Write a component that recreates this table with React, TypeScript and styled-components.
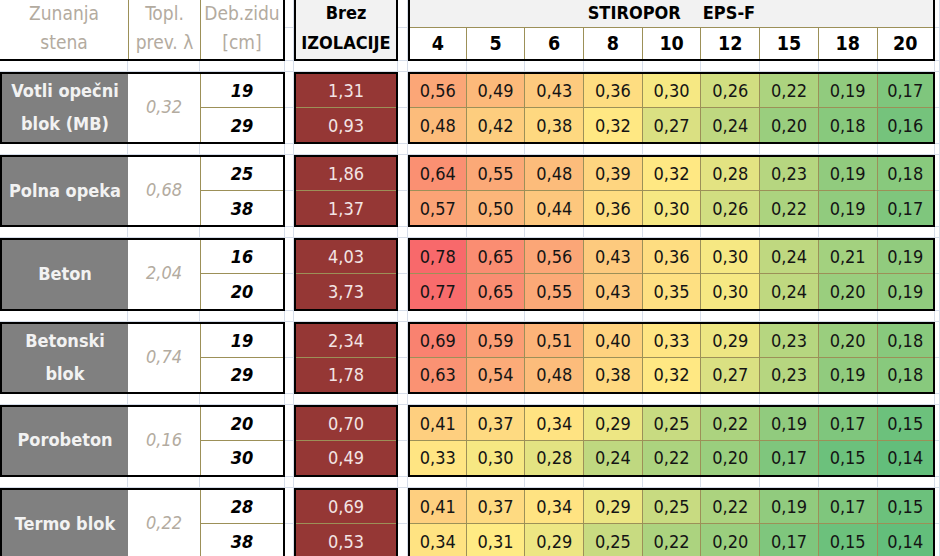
import styled, { createGlobalStyle } from "styled-components";

const GlobalStyle = createGlobalStyle`
  html, body {
    margin: 0;
    padding: 0;
    background: #ffffff;
    overflow: hidden;
  }
  body {
    font-family: "DejaVu Sans Condensed", "DejaVu Sans", sans-serif;
    font-stretch: condensed;
  }
`;

const OLIVE = "#9c9058";
const GRID = "#d6dde9";

const COLS = "128px 72px 85px 9px 104px 10px repeat(8, 58.7px) 57.4px 1fr";
const ROWS = "28px 33px 11px repeat(6, 36.1px 36.1px 11px)";

type Material = {
  name: string[];
  lambda: string;
  rows: { thickness: number; base: number; values: number[] }[];
};

const thicknesses = [4, 5, 6, 8, 10, 12, 15, 18, 20];

const materials: Material[] = [
  {
    name: ["Votli opečni", "blok (MB)"],
    lambda: "0,32",
    rows: [
      { thickness: 19, base: 1.31, values: [0.56, 0.49, 0.43, 0.36, 0.3, 0.26, 0.22, 0.19, 0.17] },
      { thickness: 29, base: 0.93, values: [0.48, 0.42, 0.38, 0.32, 0.27, 0.24, 0.2, 0.18, 0.16] },
    ],
  },
  {
    name: ["Polna opeka"],
    lambda: "0,68",
    rows: [
      { thickness: 25, base: 1.86, values: [0.64, 0.55, 0.48, 0.39, 0.32, 0.28, 0.23, 0.19, 0.18] },
      { thickness: 38, base: 1.37, values: [0.57, 0.5, 0.44, 0.36, 0.3, 0.26, 0.22, 0.19, 0.17] },
    ],
  },
  {
    name: ["Beton"],
    lambda: "2,04",
    rows: [
      { thickness: 16, base: 4.03, values: [0.78, 0.65, 0.56, 0.43, 0.36, 0.3, 0.24, 0.21, 0.19] },
      { thickness: 20, base: 3.73, values: [0.77, 0.65, 0.55, 0.43, 0.35, 0.3, 0.24, 0.2, 0.19] },
    ],
  },
  {
    name: ["Betonski", "blok"],
    lambda: "0,74",
    rows: [
      { thickness: 19, base: 2.34, values: [0.69, 0.59, 0.51, 0.4, 0.33, 0.29, 0.23, 0.2, 0.18] },
      { thickness: 29, base: 1.78, values: [0.63, 0.54, 0.48, 0.38, 0.32, 0.27, 0.23, 0.19, 0.18] },
    ],
  },
  {
    name: ["Porobeton"],
    lambda: "0,16",
    rows: [
      { thickness: 20, base: 0.7, values: [0.41, 0.37, 0.34, 0.29, 0.25, 0.22, 0.19, 0.17, 0.15] },
      { thickness: 30, base: 0.49, values: [0.33, 0.3, 0.28, 0.24, 0.22, 0.2, 0.17, 0.15, 0.14] },
    ],
  },
  {
    name: ["Termo blok"],
    lambda: "0,22",
    rows: [
      { thickness: 28, base: 0.69, values: [0.41, 0.37, 0.34, 0.29, 0.25, 0.22, 0.19, 0.17, 0.15] },
      { thickness: 38, base: 0.53, values: [0.34, 0.31, 0.29, 0.25, 0.22, 0.2, 0.17, 0.15, 0.14] },
    ],
  },
];

const fmt = (v: number) => v.toFixed(2).replace(".", ",");

// excel-like 3 colour scale: green (min) -> yellow (mid) -> red (max)
const GREEN = [99, 190, 123];
const YELLOW = [255, 235, 132];
const RED = [248, 105, 107];
const mix = (a: number[], b: number[], t: number) =>
  `rgb(${a.map((c, i) => Math.round(c + (b[i] - c) * t)).join(",")})`;

const scaleColor = (v: number) => {
  const min = 0.14;
  const mid = 0.31;
  const max = 0.78;
  if (v <= mid) return mix(GREEN, YELLOW, Math.max(0, (v - min) / (mid - min)));
  return mix(YELLOW, RED, Math.min(1, (v - mid) / (max - mid)));
};

const Sheet = styled.div`
  display: grid;
  grid-template-columns: ${COLS};
  grid-template-rows: ${ROWS};
  width: 940px;
  height: 556px;
  overflow: hidden;
  color: #141414;
`;

const Gridlines = styled.div`
  grid-row: 1 / -1;
  grid-column: 1 / -1;
  display: grid;
  grid-template-columns: ${COLS};
  grid-template-rows: ${ROWS};
`;

const GridCell = styled.div`
  border-right: 1px solid ${GRID};
  border-bottom: 1px solid ${GRID};
`;

/* ---------- header ---------- */

const WallHeader = styled.div`
  grid-row: 1 / span 2;
  grid-column: 1 / span 3;
  display: grid;
  grid-template-columns: 128px 72px 1fr;
  background: #fff;
  border-right: 2px solid #000;
  border-bottom: 2px solid #000;
`;

const HeaderCell = styled.div<{ $divider?: boolean }>`
  display: grid;
  grid-template-rows: 25px 1fr;
  align-items: center;
  justify-items: center;
  font-size: 19px;
  color: #b3aba0;
  border-left: ${(p) => (p.$divider ? `1px solid ${OLIVE}` : "none")};
`;

const BaseHeader = styled.div`
  grid-row: 1 / span 2;
  grid-column: 5;
  display: grid;
  grid-template-rows: 25px 1fr;
  align-items: center;
  justify-items: center;
  background: #f2f2f2;
  border: 2px solid #000;
  border-top: none;
  font-size: 18px;
  font-weight: 700;
  color: #000;
`;

const InsulationHeader = styled.div`
  grid-row: 1 / span 2;
  grid-column: 7 / span 9;
  display: grid;
  grid-template-columns: 56.7px repeat(7, 58.7px) 1fr;
  grid-template-rows: 28px 1fr;
  border: 2px solid #000;
  border-top: none;
  background: #fff;
  font-weight: 700;
  color: #000;
`;

const InsulationTitle = styled.div`
  grid-column: 1 / -1;
  display: flex;
  justify-content: center;
  align-items: center;
  gap: 22px;
  padding-bottom: 3px;
  background: #f2f2f2;
  border-bottom: 1px solid ${OLIVE};
  font-size: 18px;
`;

const ThicknessHead = styled.div<{ $last?: boolean }>`
  display: flex;
  justify-content: center;
  align-items: center;
  font-size: 19.5px;
  border-right: ${(p) => (p.$last ? "none" : `1px solid ${OLIVE}`)};
`;

/* ---------- data blocks ---------- */

const MaterialBlock = styled.div<{ $row: number }>`
  grid-row: ${(p) => p.$row} / span 2;
  grid-column: 1 / span 3;
  display: grid;
  grid-template-columns: 126px 72px 1fr;
  grid-template-rows: 1fr 1fr;
  border: 2px solid #000;
  background: #fff;
`;

const NameCell = styled.div`
  grid-row: 1 / span 2;
  display: flex;
  flex-direction: column;
  justify-content: center;
  align-items: center;
  background: #808080;
  color: #f2f2f2;
  font-size: 18px;
  font-weight: 700;
  line-height: 33px;
  padding-bottom: 2px;
`;

const LambdaCell = styled.div`
  grid-row: 1 / span 2;
  display: flex;
  justify-content: center;
  align-items: center;
  font-size: 18px;
  font-style: italic;
  color: #b3aba0;
  padding-bottom: 3px;
`;

const ThicknessCell = styled.div<{ $top?: boolean }>`
  grid-column: 3;
  display: flex;
  justify-content: center;
  align-items: center;
  border-left: 1px solid ${OLIVE};
  border-bottom: ${(p) => (p.$top ? `1px solid ${OLIVE}` : "none")};
  font-size: 18px;
  font-weight: 700;
  font-style: italic;
  color: #000;
`;

const BaseBlock = styled.div<{ $row: number }>`
  grid-row: ${(p) => p.$row} / span 2;
  grid-column: 5;
  display: grid;
  grid-template-rows: 1fr 1fr;
  border: 2px solid #000;
  background: #953735;
`;

const BaseCell = styled.div<{ $top?: boolean }>`
  display: flex;
  justify-content: center;
  align-items: center;
  border-bottom: ${(p) => (p.$top ? `1px solid ${OLIVE}` : "none")};
  font-size: 18px;
  color: #f3e4e4;
`;

const ValueBlock = styled.div<{ $row: number }>`
  grid-row: ${(p) => p.$row} / span 2;
  grid-column: 7 / span 9;
  display: grid;
  grid-template-columns: 56.7px repeat(7, 58.7px) 1fr;
  grid-template-rows: 1fr 1fr;
  border: 2px solid #000;
`;

const ValueCell = styled.div<{ $top?: boolean; $last?: boolean }>`
  display: flex;
  justify-content: center;
  align-items: center;
  border-right: ${(p) => (p.$last ? "none" : `1px solid ${OLIVE}`)};
  border-bottom: ${(p) => (p.$top ? `1px solid ${OLIVE}` : "none")};
  font-size: 18px;
  color: #141414;
`;

const rowCount = 3 + materials.length * 3;
const colCount = 16;

export default function App() {
  return (
    <>
      <GlobalStyle />
      <Sheet>
        <Gridlines>
          {Array.from({ length: rowCount * colCount }, (_, i) => (
            <GridCell key={i} />
          ))}
        </Gridlines>

        <WallHeader>
          <HeaderCell>
            <span>Zunanja</span>
            <span>stena</span>
          </HeaderCell>
          <HeaderCell $divider>
            <span>Topl.</span>
            <span>prev. λ</span>
          </HeaderCell>
          <HeaderCell $divider>
            <span>Deb.zidu</span>
            <span>[cm]</span>
          </HeaderCell>
        </WallHeader>

        <BaseHeader>
          <span>Brez</span>
          <span>IZOLACIJE</span>
        </BaseHeader>

        <InsulationHeader>
          <InsulationTitle>
            <span>STIROPOR</span>
            <span>EPS-F</span>
          </InsulationTitle>
          {thicknesses.map((t, i) => (
            <ThicknessHead key={t} $last={i === thicknesses.length - 1}>
              {t}
            </ThicknessHead>
          ))}
        </InsulationHeader>

        {materials.map((m, i) => {
          const row = 4 + i * 3;
          return [
            <MaterialBlock key={`m${i}`} $row={row}>
              <NameCell>
                {m.name.map((line) => (
                  <span key={line}>{line}</span>
                ))}
              </NameCell>
              <LambdaCell>{m.lambda}</LambdaCell>
              <ThicknessCell $top>{m.rows[0].thickness}</ThicknessCell>
              <ThicknessCell>{m.rows[1].thickness}</ThicknessCell>
            </MaterialBlock>,
            <BaseBlock key={`b${i}`} $row={row}>
              <BaseCell $top>{fmt(m.rows[0].base)}</BaseCell>
              <BaseCell>{fmt(m.rows[1].base)}</BaseCell>
            </BaseBlock>,
            <ValueBlock key={`v${i}`} $row={row}>
              {m.rows.map((r, ri) =>
                r.values.map((v, vi) => (
                  <ValueCell
                    key={`${ri}-${vi}`}
                    $top={ri === 0}
                    $last={vi === r.values.length - 1}
                    style={{ background: scaleColor(v) }}
                  >
                    {fmt(v)}
                  </ValueCell>
                ))
              )}
            </ValueBlock>,
          ];
        })}
      </Sheet>
    </>
  );
}
